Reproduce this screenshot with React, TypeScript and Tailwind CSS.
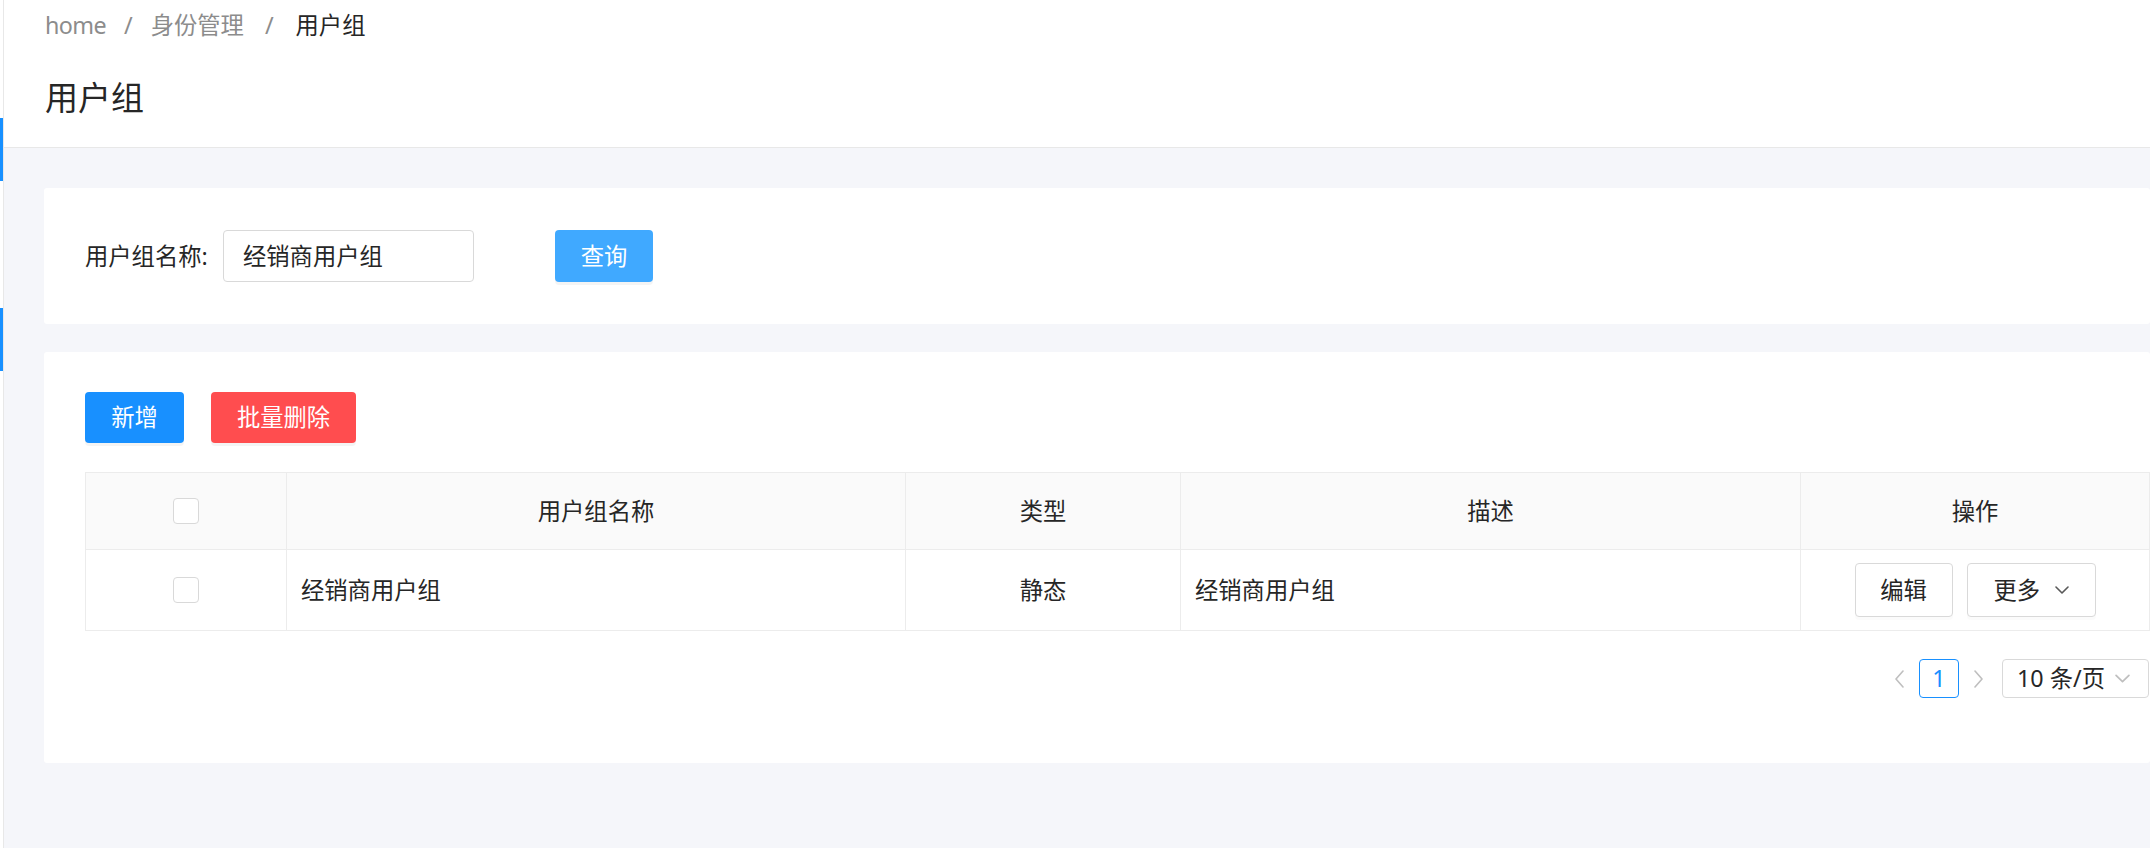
import React from "react";

const Chevron = ({ dir, className }: { dir: "down" | "left" | "right"; className?: string }) => {
  const pts =
    dir === "down" ? "1,1 7,7 13,1" : dir === "left" ? "9,1 2,9 9,17" : "2,1 9,9 2,17";
  const vb = dir === "down" ? "0 0 14 8" : "0 0 11 18";
  return (
    <svg viewBox={vb} className={className} fill="none" stroke="currentColor" strokeWidth={1.6} strokeLinecap="round" strokeLinejoin="round">
      <polyline points={pts} />
    </svg>
  );
};

const Checkbox = () => (
  <div className="w-[26px] h-[26px] rounded-[4px] border border-[#d9d9d9] bg-white" />
);

export default function App() {
  return (
    <div className="w-[2150px] h-[848px] overflow-hidden flex bg-[#f5f6fa] font-['Noto_Sans','Noto_Sans_CJK_SC',sans-serif] text-[#262626]">
      {/* sidebar edge */}
      <div className="w-[4px] shrink-0 bg-white border-r border-[#e8e8e8] flex flex-col">
        <div className="mt-[118px] h-[63px] w-[3px] bg-[#1890ff]" />
        <div className="mt-[127px] h-[63px] w-[3px] bg-[#1890ff]" />
      </div>

      <div className="flex-1 flex flex-col min-w-0">
        {/* header */}
        <div className="bg-white border-b border-[#e8e8e8] pl-[41px] pt-[8px] pb-[24px]">
          <div className="h-[35px] flex items-center text-[23.3px] leading-[35px]">
            <span className="text-[#8c8c8c] tracking-[-0.6px]">home</span>
            <span className="text-[#8c8c8c] mx-[18px]">/</span>
            <span className="text-[#8c8c8c]">身份管理</span>
            <span className="text-[#8c8c8c] ml-[21px] mr-[22px]">/</span>
            <span className="text-[#262626]">用户组</span>
          </div>
          <div className="mt-[29px] h-[51px] flex items-center text-[33px] leading-[51px] text-[#262626]">
            用户组
          </div>
        </div>

        {/* content */}
        <div className="pt-[40px] pl-[40px] flex flex-col">
          {/* search card */}
          <div className="bg-white rounded-[3px] h-[136px] pl-[41px] flex items-center text-[23.3px]">
            <span className="w-[138px] shrink-0 text-[#262626]">用户组名称:</span>
            <div className="w-[251px] h-[52px] border border-[#d9d9d9] rounded-[4px] flex items-center pl-[19px] text-[#262626]">
              经销商用户组
            </div>
            <button className="ml-[81px] w-[98px] h-[52px] rounded-[4px] bg-[#40a9ff] text-white shadow-[0_3px_0_rgba(0,0,0,0.045)]">
              查询
            </button>
          </div>

          {/* table card */}
          <div className="mt-[28px] bg-white rounded-[3px] h-[411px] pl-[41px] pt-[40px] flex flex-col text-[23.3px]">
            <div className="flex gap-[27px]">
              <button className="w-[99px] h-[51px] rounded-[4px] bg-[#1890ff] text-white shadow-[0_3px_0_rgba(0,0,0,0.045)]">
                新增
              </button>
              <button className="w-[145px] h-[51px] rounded-[4px] bg-[#ff4d4f] text-white shadow-[0_3px_0_rgba(0,0,0,0.045)]">
                批量删除
              </button>
            </div>

            <div className="mt-[29px] border-l border-t border-[#ececec] grid grid-cols-[201px_619px_275px_620px_1fr]">
              {/* header */}
              <div className="h-[77px] bg-[#fafafa] border-r border-b border-[#ececec] flex items-center justify-center">
                <Checkbox />
              </div>
              <div className="h-[77px] bg-[#fafafa] border-r border-b border-[#ececec] flex items-center justify-center">用户组名称</div>
              <div className="h-[77px] bg-[#fafafa] border-r border-b border-[#ececec] flex items-center justify-center">类型</div>
              <div className="h-[77px] bg-[#fafafa] border-r border-b border-[#ececec] flex items-center justify-center">描述</div>
              <div className="h-[77px] bg-[#fafafa] border-r border-b border-[#ececec] flex items-center justify-center">操作</div>
              {/* row */}
              <div className="h-[81px] border-r border-b border-[#ececec] flex items-center justify-center">
                <Checkbox />
              </div>
              <div className="h-[81px] border-r border-b border-[#ececec] flex items-center pl-[14px]">经销商用户组</div>
              <div className="h-[81px] border-r border-b border-[#ececec] flex items-center justify-center">静态</div>
              <div className="h-[81px] border-r border-b border-[#ececec] flex items-center pl-[14px]">经销商用户组</div>
              <div className="h-[81px] border-r border-b border-[#ececec] flex items-center justify-center gap-[14px]">
                <button className="h-[54px] w-[98px] rounded-[4px] border border-[#d9d9d9] bg-white shadow-[0_3px_0_rgba(0,0,0,0.015)]">
                  编辑
                </button>
                <button className="h-[54px] w-[129px] rounded-[4px] border border-[#d9d9d9] bg-white flex items-center pl-[26px] shadow-[0_3px_0_rgba(0,0,0,0.015)]">
                  <span>更多</span>
                  <Chevron dir="down" className="ml-[15px] w-[14px] h-[8px] text-[#595959]" />
                </button>
              </div>
            </div>

            {/* pagination */}
            <div className="mt-[28px] flex justify-end items-center h-[39px] pr-[1px]">
              <div className="w-[39px] h-[39px] flex items-center justify-center text-[#bfbfbf]">
                <Chevron dir="left" className="w-[11px] h-[18px]" />
              </div>
              <div className="w-[40px] h-[39px] rounded-[4px] border border-[#1890ff] text-[#1890ff] flex items-center justify-center">
                1
              </div>
              <div className="w-[39px] h-[39px] flex items-center justify-center text-[#bfbfbf]">
                <Chevron dir="right" className="w-[11px] h-[18px]" />
              </div>
              <div className="ml-[4px] w-[147px] h-[39px] rounded-[4px] border border-[#d9d9d9] flex items-center pl-[14px] pr-[18px] justify-between">
                <span>10 条/页</span>
                <Chevron dir="down" className="w-[15px] h-[9px] text-[#bfbfbf]" />
              </div>
            </div>
          </div>
        </div>
      </div>
    </div>
  );
}
